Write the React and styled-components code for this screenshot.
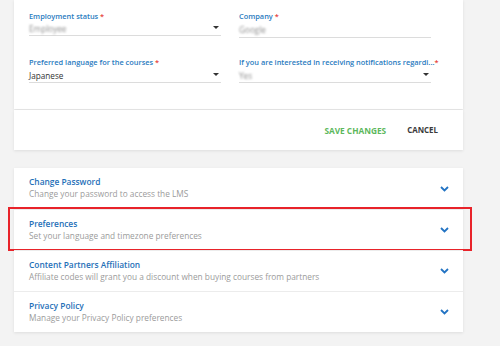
import React from "react";
import styled, { createGlobalStyle } from "styled-components";

const Global = createGlobalStyle`
  html, body { margin: 0; padding: 0; background: #f3f3f3; }
  body { font-family: "Open Sans", "Liberation Sans", sans-serif; }
  * { box-sizing: border-box; }
`;

const Page = styled.div`
  width: 500px;
  height: 346px;
  padding-left: 14px;
  overflow: hidden;
`;

const Column = styled.div`
  width: 449px;
  display: flex;
  flex-direction: column;
`;

const Card = styled.div`
  background: #fff;
  box-shadow: 0 1px 3px rgba(0, 0, 0, 0.09);
`;

const FormCard = styled(Card)`
  height: 109px;
  padding: 10px 0 0 15px;
  display: grid;
  grid-template-columns: 192px 192px;
  column-gap: 18px;
  row-gap: 18px;
  align-content: start;
  align-items: start;
`;

const Field = styled.div`
  display: flex;
  flex-direction: column;
`;

const Label = styled.div`
  font-size: 7.4px;
  font-weight: 600;
  line-height: 12px;
  color: #2a7bc0;
  white-space: nowrap;
  span { color: #e53935; }
`;

const Input = styled.div`
  height: ${(p) => p.$h}px;
  border-bottom: 1px solid #dcdcdc;
  display: flex;
  align-items: center;
  justify-content: space-between;
  padding-right: 1px;
`;

const Blurred = styled.span`
  font-size: 8.2px;
  color: #8e8e8e;
  filter: blur(1.1px);
`;

const Value = styled.span`
  font-size: 8.2px;
  color: #333;
`;

const Caret = styled.span`
  width: 0;
  height: 0;
  border-left: 3px solid transparent;
  border-right: 3px solid transparent;
  border-top: 3.5px solid #333;
  margin-top: -2px;
  margin-right: 1px;
`;

const ActionCard = styled(Card)`
  margin-top: 1px;
  height: 40px;
  display: flex;
  align-items: center;
  justify-content: flex-end;
  gap: 21px;
  padding: 0 25px 0 0;
`;

const ActionButton = styled.button`
  border: none;
  background: none;
  padding: 0;
  font-family: inherit;
  font-size: ${(p) => (p.$primary ? 8.3 : 7.9)}px;
  font-weight: 700;
  color: ${(p) => (p.$primary ? "#5cb85c" : "#3a3a3a")};
  text-transform: uppercase;
`;

const AccordionCard = styled(Card)`
  margin-top: 18px;
`;

const Item = styled.div`
  position: relative;
  height: 41px;
  display: flex;
  align-items: center;
  justify-content: space-between;
  padding: 0 15px;
  border-top: ${(p) => (p.$first ? "none" : "1px solid #ececec")};
`;

const ItemText = styled.div`
  display: flex;
  flex-direction: column;
  margin-top: -2px;
`;

const Title = styled.div`
  font-size: 8.4px;
  font-weight: 600;
  line-height: 12px;
  color: #1f70b8;
`;

const Subtitle = styled.div`
  font-size: 8.3px;
  line-height: 11px;
  color: #9b9b9b;
`;

const Highlight = styled.div`
  position: absolute;
  top: -3px;
  bottom: -1px;
  left: -6px;
  right: -9px;
  border: 2px solid #e8232a;
  pointer-events: none;
`;

const Chevron = () => (
  <svg width="9" height="6" viewBox="0 0 9 6" style={{ marginRight: "-1px" }}>
    <polyline points="1,1 4.5,4.5 8,1" fill="none" stroke="#2273c3" strokeWidth="1.8" />
  </svg>
);

const items = [
  { t: "Change Password", s: "Change your password to access the LMS" },
  { t: "Preferences", s: "Set your language and timezone preferences", hl: true },
  { t: "Content Partners Affiliation", s: "Affiliate codes will grant you a discount when buying courses from partners" },
  { t: "Privacy Policy", s: "Manage your Privacy Policy preferences" },
];

export default function App() {
  return (
    <>
      <Global />
      <Page>
        <Column>
          <FormCard>
            <Field>
              <Label>Employment status <span>*</span></Label>
              <Input $h={14}>
                <Blurred>Employee</Blurred>
                <Caret />
              </Input>
            </Field>
            <Field>
              <Label>Company <span>*</span></Label>
              <Input $h={16}>
                <Blurred>Google</Blurred>
              </Input>
            </Field>
            <Field>
              <Label>Preferred language for the courses <span>*</span></Label>
              <Input $h={15}>
                <Value>Japanese</Value>
                <Caret />
              </Input>
            </Field>
            <Field>
              <Label>If you are interested in receiving notifications regardi...<span>*</span></Label>
              <Input $h={15}>
                <Blurred>Yes</Blurred>
                <Caret />
              </Input>
            </Field>
          </FormCard>
          <ActionCard>
            <ActionButton $primary>Save Changes</ActionButton>
            <ActionButton>Cancel</ActionButton>
          </ActionCard>
          <AccordionCard>
            {items.map((it, i) => (
              <Item key={it.t} $first={i === 0}>
                <ItemText>
                  <Title>{it.t}</Title>
                  <Subtitle>{it.s}</Subtitle>
                </ItemText>
                <Chevron />
                {it.hl && <Highlight />}
              </Item>
            ))}
          </AccordionCard>
        </Column>
      </Page>
    </>
  );
}
